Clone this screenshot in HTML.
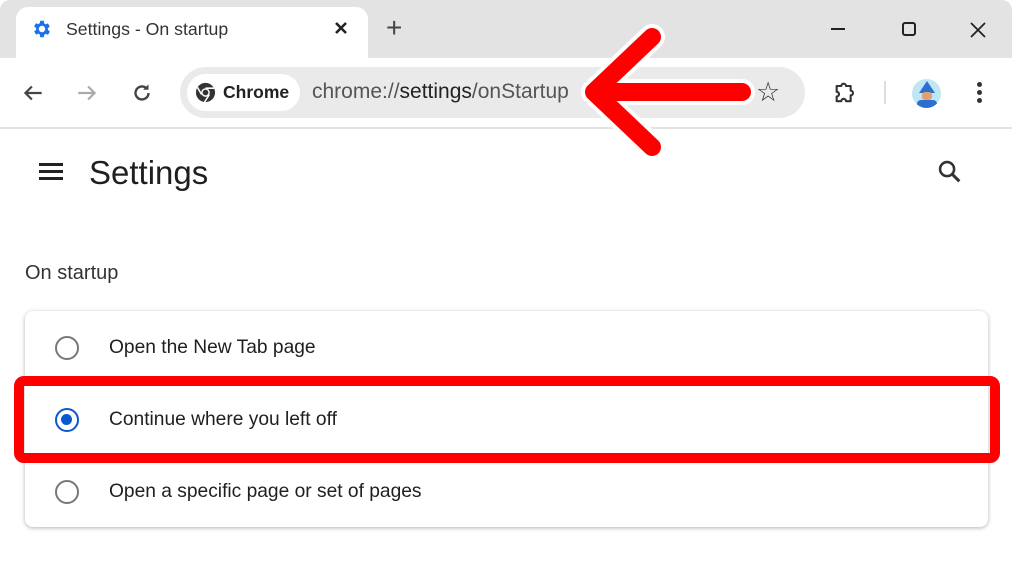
<!DOCTYPE html>
<html><head><meta charset="utf-8"><style>
*{margin:0;padding:0;box-sizing:border-box}
body{width:1012px;height:574px;overflow:hidden;background:#fff;font-family:"Liberation Sans",sans-serif;position:relative;color:#1f1f1f}
.abs{position:absolute}
</style></head><body>
<div class="abs" style="left:0;top:0;width:1012px;height:58px;background:#e3e3e3;border-radius:10px 10px 0 0"></div>
<div class="abs" style="left:16px;top:7px;width:352px;height:52px;background:#fff;border-radius:12px 12px 0 0"></div>
<svg class="abs" style="left:31px;top:18px" width="22" height="22" viewBox="0 0 24 24"><path fill="#1a73e8" d="M19.4 13a7.5 7.5 0 000-2l2.1-1.6-2-3.5-2.5 1a7 7 0 00-1.7-1L15 3h-4l-.4 2.7a7 7 0 00-1.7 1l-2.5-1-2 3.5L6.6 11a7.5 7.5 0 000 2l-2.1 1.6 2 3.5 2.5-1a7 7 0 001.7 1L11 21h4l.4-2.7a7 7 0 001.7-1l2.5 1 2-3.5zM13 15.5a3.5 3.5 0 110-7 3.5 3.5 0 010 7z" transform="translate(-1 0)"/></svg>
<div class="abs" style="left:66px;top:19px;font-size:17.7px;color:#333">Settings - On startup</div>
<svg class="abs" style="left:334px;top:21px" width="14" height="14"><path d="M2 2l10 10M12 2L2 12" stroke="#222" stroke-width="2.6"/></svg>
<div class="abs" style="left:386px;top:12px;font-size:28px;color:#444;font-weight:300">+</div>
<div class="abs" style="left:831px;top:28px;width:14px;height:2px;background:#222"></div>
<div class="abs" style="left:902px;top:22px;width:14px;height:14px;border:2px solid #222;border-radius:3px"></div>
<svg class="abs" style="left:970px;top:22px" width="16" height="16"><path d="M1 1l14 14M15 1L1 15" stroke="#222" stroke-width="1.8"/></svg>
<div class="abs" style="left:0;top:127px;width:1012px;height:2px;background:#e3e3e3"></div>
<svg class="abs" style="left:20px;top:80px" width="26" height="26" viewBox="0 0 24 24"><path d="M20 12H5M11 6l-6 6 6 6" stroke="#444" stroke-width="2" fill="none"/></svg>
<svg class="abs" style="left:74px;top:80px" width="26" height="26" viewBox="0 0 24 24"><path d="M4 12h15M13 6l6 6-6 6" stroke="#aaa" stroke-width="2" fill="none"/></svg>
<svg class="abs" style="left:129px;top:80px" width="26" height="26" viewBox="0 0 24 24"><path d="M18 12a6 6 0 11-2-4.5" stroke="#444" stroke-width="2.2" fill="none"/><path d="M18 4v5h-5" fill="#444"/></svg>
<div class="abs" style="left:180px;top:67px;width:625px;height:51px;background:#ebeaeb;border-radius:26px"></div>
<div class="abs" style="left:187px;top:74px;width:113px;height:37px;background:#fff;border-radius:19px"></div>
<svg class="abs" style="left:194px;top:81px" width="23" height="23" viewBox="0 0 24 24"><circle cx="12" cy="12" r="10" fill="#333"/><circle cx="12" cy="12" r="4.5" fill="#fff"/><circle cx="12" cy="12" r="3" fill="#333"/><path d="M12 7.5h9M8 14.2L3.5 6.5M16 14.2L11 22" stroke="#fff" stroke-width="1.6"/></svg>
<div class="abs" style="left:223px;top:82px;font-size:17.5px;font-weight:bold;color:#222">Chrome</div>
<div class="abs" style="left:312px;top:80px;font-size:21px;color:#555">chrome://<span style="color:#222">settings</span>/onStartup</div>
<div class="abs" style="left:756px;top:77px;font-size:27px;color:#333">☆</div>
<svg class="abs" style="left:832px;top:79px" width="28" height="28" viewBox="0 0 24 24"><path d="M4 6h4a2 2 0 014 0h4v4a2 2 0 010 4v5H12a2 2 0 00-4 0H4v-4a2 2 0 000-4z" stroke="#333" stroke-width="1.8" fill="none" stroke-linejoin="round"/></svg>
<div class="abs" style="left:884px;top:81px;width:2px;height:23px;background:#ddd"></div>
<div class="abs" style="left:912px;top:79px;width:29px;height:29px;border-radius:50%;background:#bfe6f5;overflow:hidden"><div class="abs" style="left:7px;top:2px;width:0;height:0;border-left:8px solid transparent;border-right:8px solid transparent;border-bottom:12px solid #2d6fd1"></div><div class="abs" style="left:10px;top:13px;width:10px;height:8px;background:#e0a070;border-radius:3px"></div><div class="abs" style="left:5px;top:21px;width:20px;height:10px;background:#2d6fd1;border-radius:4px"></div></div>
<div class="abs" style="left:977px;top:82px;width:5px;height:5px;border-radius:50%;background:#333;box-shadow:0 8px 0 #333,0 16px 0 #333"></div>
<div class="abs" style="left:39px;top:163px;width:24px;height:3px;background:#222;box-shadow:0 7px 0 #222,0 14px 0 #222"></div>
<div class="abs" style="left:89px;top:154px;font-size:33px;color:#1f1f1f">Settings</div>
<svg class="abs" style="left:936px;top:158px" width="28" height="28" viewBox="0 0 24 24"><circle cx="9.5" cy="9.5" r="6" stroke="#333" stroke-width="2.2" fill="none"/><path d="M14 14l6 6" stroke="#333" stroke-width="2.6"/></svg>
<div class="abs" style="left:25px;top:262px;font-size:20px;color:#333">On startup</div>
<div class="abs" style="left:25px;top:311px;width:963px;height:216px;background:#fff;border-radius:8px;box-shadow:0 1px 4px rgba(0,0,0,.3)"></div>
<div class="abs" style="left:55px;top:336px;width:24px;height:24px;border-radius:50%;border:2.5px solid #777"></div>
<div class="abs" style="left:109px;top:337px;font-size:19.2px">Open the New Tab page</div>
<div class="abs" style="left:55px;top:408px;width:24px;height:24px;border-radius:50%;border:2.5px solid #0b57d0"><div style="margin:4px;width:11px;height:11px;border-radius:50%;background:#0b57d0"></div></div>
<div class="abs" style="left:109px;top:409px;font-size:19.2px">Continue where you left off</div>
<div class="abs" style="left:55px;top:480px;width:24px;height:24px;border-radius:50%;border:2.5px solid #777"></div>
<div class="abs" style="left:109px;top:481px;font-size:19.2px">Open a specific page or set of pages</div>
<div class="abs" style="left:14px;top:376px;width:986px;height:87px;border:10px solid #fe0000;border-radius:10px"></div>
<svg class="abs" style="left:0;top:0" width="1012" height="574"><g fill="none" stroke-linecap="round" stroke-linejoin="round"><path d="M742 92H594M652 37L594 92 652 147" stroke="#fff" stroke-width="26"/><path d="M742 92H594M652 37L594 92 652 147" stroke="#fe0000" stroke-width="18"/></g></svg>
</body></html>
